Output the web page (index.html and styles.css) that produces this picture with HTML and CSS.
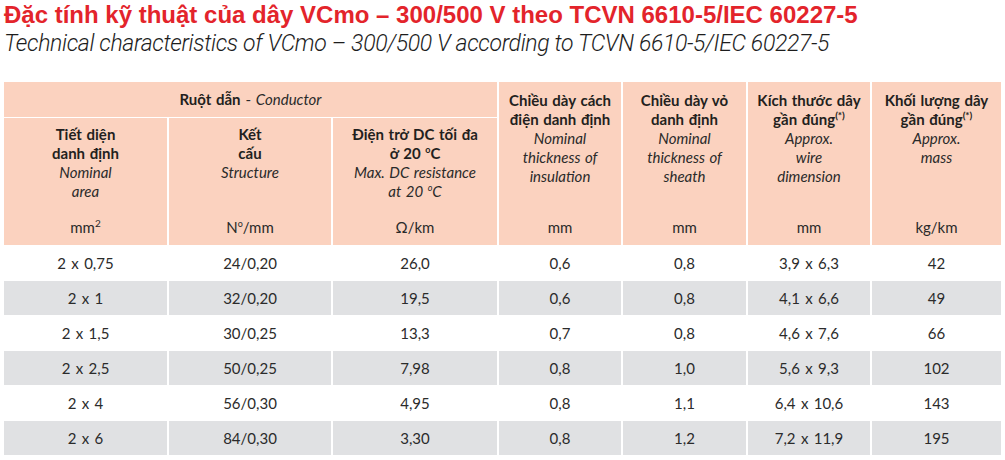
FILE: index.html
```html
<!DOCTYPE html>
<html lang="vi">
<head>
<meta charset="utf-8">
<title>VCmo 300/500 V</title>
<link rel="stylesheet" href="styles.css">
</head>
<body>
<div class="page">
  <h1 class="title">Đặc tính kỹ thuật của dây VCmo – 300/500 V theo TCVN 6610-5/IEC 60227-5</h1>
  <p class="subtitle">Technical characteristics of VCmo – 300/500 V according to TCVN 6610-5/IEC 60227-5</p>

  <div class="table">
    <div class="hcell group"><span><b>Ruột dẫn</b> - <i>Conductor</i></span></div>
    <div class="hcell tall c4">
      <div class="desc"><b>Chiều dày cách<br>điện danh định</b><i>Nominal<br>thickness of<br>insulation</i></div>
      <div class="unit">mm</div>
    </div>
    <div class="hcell tall c5">
      <div class="desc"><b>Chiều dày vỏ<br>danh định</b><i>Nominal<br>thickness of<br>sheath</i></div>
      <div class="unit">mm</div>
    </div>
    <div class="hcell tall c6">
      <div class="desc"><b>Kích thước dây<br>gần đúng<sup>(*)</sup></b><i>Approx.<br>wire<br>dimension</i></div>
      <div class="unit">mm</div>
    </div>
    <div class="hcell tall c7">
      <div class="desc"><b>Khối lượng dây<br>gần đúng<sup>(*)</sup></b><i>Approx.<br>mass</i></div>
      <div class="unit">kg/km</div>
    </div>
    <div class="hcell sub">
      <div class="desc"><b>Tiết diện<br>danh định</b><i>Nominal<br>area</i></div>
      <div class="unit">mm<sup class="sq">2</sup></div>
    </div>
    <div class="hcell sub">
      <div class="desc"><b>Kết<br>cấu</b><i>Structure</i></div>
      <div class="unit">N<sup class="deg">o</sup>/mm</div>
    </div>
    <div class="hcell sub">
      <div class="desc"><b>Điện trở DC tối đa<br>ở 20 <sup class="deg">o</sup>C</b><i>Max. DC resistance<br>at 20 <sup class="deg">o</sup>C</i></div>
      <div class="unit">Ω/km</div>
    </div>

    <div class="cell">2 x 0,75</div><div class="cell">24/0,20</div><div class="cell">26,0</div><div class="cell">0,6</div><div class="cell">0,8</div><div class="cell">3,9 x 6,3</div><div class="cell">42</div>
    <div class="cell alt">2 x 1</div><div class="cell alt">32/0,20</div><div class="cell alt">19,5</div><div class="cell alt">0,6</div><div class="cell alt">0,8</div><div class="cell alt">4,1 x 6,6</div><div class="cell alt">49</div>
    <div class="cell">2 x 1,5</div><div class="cell">30/0,25</div><div class="cell">13,3</div><div class="cell">0,7</div><div class="cell">0,8</div><div class="cell">4,6 x 7,6</div><div class="cell">66</div>
    <div class="cell alt">2 x 2,5</div><div class="cell alt">50/0,25</div><div class="cell alt">7,98</div><div class="cell alt">0,8</div><div class="cell alt">1,0</div><div class="cell alt">5,6 x 9,3</div><div class="cell alt">102</div>
    <div class="cell">2 x 4</div><div class="cell">56/0,30</div><div class="cell">4,95</div><div class="cell">0,8</div><div class="cell">1,1</div><div class="cell">6,4 x 10,6</div><div class="cell">143</div>
    <div class="cell alt">2 x 6</div><div class="cell alt">84/0,30</div><div class="cell alt">3,30</div><div class="cell alt">0,8</div><div class="cell alt">1,2</div><div class="cell alt">7,2 x 11,9</div><div class="cell alt">195</div>
  </div>
</div>
</body>
</html>
```

FILE: styles.css
```css
html, body {
  margin: 0;
  padding: 0;
  background: #ffffff;
}

.page {
  padding: 1px 0 0 4px;
  width: 1001px;
}

.title {
  margin: 0;
  font-family: "Liberation Sans", Arial, sans-serif;
  font-weight: 700;
  font-size: 24px;
  line-height: 27px;
  color: #e3242b;
  white-space: nowrap;
}

.subtitle {
  margin: 2px 0 0 0;
  font-family: Roboto, "Liberation Sans", sans-serif;
  font-style: italic;
  font-weight: 300;
  font-size: 23px;
  line-height: 27px;
  letter-spacing: -0.35px;
  color: #1d1d1d;
  white-space: nowrap;
}

.table {
  margin-top: 25px;
  display: grid;
  grid-template-columns: 163px 162px 164px 122px 123px 122px 129px;
  grid-template-rows: 35px 127px repeat(6, 34px);
  column-gap: 2px;
  row-gap: 1px;
  font-family: Lato, "Open Sans", sans-serif;
  font-size: 15px;
  color: #2a2a2a;
}

.hcell {
  background: #fbd2bf;
  text-align: center;
  line-height: 19px;
  word-spacing: 1px;
}

.hcell b {
  font-weight: 700;
  color: #231f20;
}

.hcell i {
  font-style: italic;
  font-weight: 400;
  color: #2a2a2a;
}

.group {
  grid-column: 1 / 4;
  grid-row: 1;
  display: flex;
  align-items: center;
  justify-content: center;
}

.tall {
  grid-row: 1 / 3;
  display: flex;
  flex-direction: column;
  justify-content: space-between;
  padding: 9px 2px 8px;
}

.sub {
  grid-row: 2;
  display: flex;
  flex-direction: column;
  justify-content: space-between;
  padding: 7px 2px 8px;
}

.c4 { grid-column: 4; }
.c5 { grid-column: 5; }
.c6 { grid-column: 6; }
.c7 { grid-column: 7; }

.desc b,
.desc i {
  display: block;
}

.unit {
  line-height: 19px;
}

sup {
  font-size: 10px;
  line-height: 0;
  vertical-align: 6px;
}

sup.deg {
  font-size: 9px;
}

.cell {
  display: flex;
  align-items: center;
  justify-content: center;
  background: #ffffff;
  font-size: 15px;
  word-spacing: 1.5px;
  color: #2b2b2b;
}

.cell.alt {
  background: #e0e1e3;
}
```
